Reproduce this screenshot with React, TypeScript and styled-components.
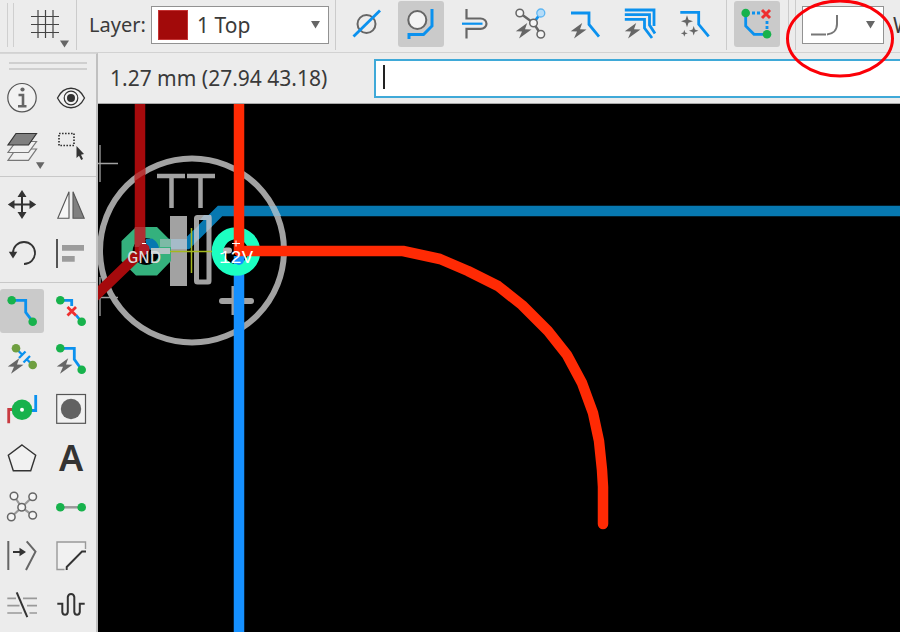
import React from "react";
import styled, { createGlobalStyle, css } from "styled-components";

const BLUE = "#0b91ee";
const GREEN = "#17b24c";
const RED = "#ee2f2f";
const GREY = "#666";
const DARK = "#333";

const GlobalStyle = createGlobalStyle`
  * { box-sizing: border-box; }
  html, body, #root { height: 100%; }
  body {
    margin: 0;
    overflow: hidden;
    background: #ececec;
    color: #3a3a3a;
    font: 21px/28px "Noto Sans", "Open Sans", sans-serif;
  }
`;

const Page = styled.div`
  position: relative;
  display: flex;
  flex-direction: column;
  height: 100vh;
  overflow: hidden;
`;

const Toolbar = styled.header`
  display: flex;
  align-items: flex-start;
  flex: none;
  height: 53px;
  padding-left: 7px;
  overflow: hidden;
  border-bottom: 1px solid #d2d2d2;
  white-space: nowrap;
  > * { flex: none; }
`;

const Workspace = styled.div`
  display: flex;
  flex: 1;
  min-height: 0;
`;

const Grip = styled.div<{ $flat?: boolean }>`
  border: solid #cfcfcf;
  ${(p) =>
    p.$flat
      ? css`height: 8px; margin: 8px 9px 6px; border-width: 2px 0;`
      : css`width: 7px; height: 44px; margin: 3px 0 0; border-width: 0 1px;`}
`;

const Separator = styled.div<{ $before: number; $after: number }>`
  width: 1px;
  height: 50px;
  margin-left: ${(p) => p.$before}px;
  margin-right: ${(p) => p.$after}px;
  background: #cbcbcb;
`;

const ToolButton = styled.button<{ $size: number; $active?: boolean }>`
  display: grid;
  place-items: center;
  width: ${(p) => p.$size}px;
  height: ${(p) => p.$size}px;
  padding: 0;
  border: 0;
  border-radius: 3px;
  background: ${(p) => (p.$active ? "#cacaca" : "transparent")};
`;

const GridButton = styled(ToolButton)`
  margin: 1px 0 0 8px;
`;

const LayerLabel = styled.label`
  width: 62px;
  padding-top: 11px;
  font-size: 20px;
`;

const WidthLabel = styled.label`
  padding: 11px 0 0 9px;
`;

const DropDown = styled.div<{ $width: number }>`
  display: flex;
  align-items: center;
  width: ${(p) => p.$width}px;
  height: 38px;
  margin-top: 6px;
  padding: 0 8px 0 6px;
  border: 1px solid #929292;
  background: #fff;
`;

const Swatch = styled.span`
  width: 30px;
  height: 30px;
  border: 1px solid #c43333;
  background: #a20a0a;
`;

const Select = styled.select`
  flex: 1;
  min-width: 0;
  height: 34px;
  padding: 0 0 0 9px;
  border: 0;
  outline: 0;
  appearance: none;
  background: transparent;
  color: inherit;
  font: inherit;
`;

const RoutingTools = styled.div`
  display: grid;
  grid-template-columns: repeat(7, 1fr);
  justify-items: center;
  width: 382px;
  padding-top: 1px;
`;

const RatsnestTools = styled.div`
  padding-top: 1px;
`;

const Palette = styled.aside`
  flex: none;
  width: 98px;
  border-top: 1px solid #d6d6d6;
  border-right: 2px solid #c0c0c0;
  overflow: hidden;
`;

const PaletteGroup = styled.div`
  display: grid;
  grid-template-columns: 44px 44px;
  grid-auto-rows: 44px;
  gap: 5px;
  padding: 6px 0;
  & + & { border-top: 1px solid #c8c8c8; }
`;

const PaletteFirst = styled(PaletteGroup)`
  padding: 0 0 7px;
`;

const Main = styled.main`
  display: flex;
  flex: 1;
  flex-direction: column;
  min-width: 0;
`;

const CommandBar = styled.div`
  display: flex;
  align-items: center;
  flex: none;
  height: 51px;
  border-bottom: 1px solid #a8a8a8;
`;

const Coordinates = styled.output`
  flex: none;
  width: 276px;
  padding-left: 12px;
  white-space: nowrap;
`;

const CommandField = styled.label`
  display: flex;
  align-items: center;
  flex: 1;
  height: 39px;
  padding-left: 7px;
  border: 2px solid #3fa9d8;
  border-right: 0;
  background: #fff;
`;

const Caret = styled.span`
  width: 2px;
  height: 24px;
  margin-bottom: 3px;
  background: #222;
`;

const CommandInput = styled.input`
  flex: 1;
  min-width: 0;
  border: 0;
  outline: 0;
  background: transparent;
  font: inherit;
`;

const Board = styled.svg`
  display: block;
  flex: 1;
  width: 100%;
  min-height: 0;
  background: #000;
`;

const Highlight = styled.svg`
  position: absolute;
  top: 0;
  left: 785px;
  width: 110px;
  height: 80px;
  pointer-events: none;
`;

const IconSvg = styled.svg`
  display: block;
  width: 32px;
  height: 32px;
  overflow: visible;
  fill: none;
`;

const ArrowSvg = styled.svg`
  display: block;
  flex: none;
  width: 9px;
  height: 8px;
`;

const BendSvg = styled.svg`
  display: block;
  flex: none;
  width: 30px;
  height: 24px;
`;

const Arrow = () => (
  <ArrowSvg viewBox="0 0 9 8" aria-hidden>
    <path d="M0 0H9L4.500 7.500Z" fill={GREY} />
  </ArrowSvg>
);

const Bolt = ({ y = 0 }: { y?: number }) => (
  <path
    transform={`translate(0 ${y})`}
    d="M13.2 15 1.8 23.2 8 23.6 5 30.500 17.500 21.500 11 21.200Z"
    fill={GREY}
  />
);

const Dot = ({ x, y, r = 4.3, fill = GREEN }: { x: number; y: number; r?: number; fill?: string }) => (
  <circle cx={x} cy={y} r={r} fill={fill} />
);

const Node = ({ x, y }: { x: number; y: number }) => (
  <circle cx={x} cy={y} r="3.800" fill="#f5f5f5" stroke={GREY} strokeWidth="1.500" />
);

const sparkle = (x: number, y: number, r: number) =>
  `M${x} ${y - r}L${x + r / 4} ${y - r / 4}L${x + r} ${y}L${x + r / 4} ${y + r / 4}L${x} ${y + r}L${x - r / 4} ${y + r / 4}L${x - r} ${y}L${x - r / 4} ${y - r / 4}Z`;

const ignoreObstacles = (
  <>
    <circle cx="16.500" cy="16" r="9" stroke={GREY} strokeWidth="2" />
    <path d="M3.500 28.500 30 2.500" stroke={BLUE} strokeWidth="2.800" />
  </>
);
const walkaround = (
  <>
    <circle cx="12.300" cy="12" r="9" fill="#f3f3f3" stroke={GREY} strokeWidth="2" />
    <path d="M27 1V18L18.500 26.500H4V31" stroke={BLUE} strokeWidth="3" />
  </>
);
const pushTrace = (
  <>
    <path d="M7.500 1V10.500H21.500A6 5.200 0 0 1 21.500 20.900H7.500V30.500" stroke={GREY} strokeWidth="2.200" />
    <path d="M3 15.700H23.500" stroke={BLUE} strokeWidth="2.200" />
  </>
);
const fanout = (
  <>
    <path d="M5.800 5 19.500 15 26.800 26.300" stroke={GREY} strokeWidth="2.500" />
    <path d="M19.500 15 26.800 5" stroke={BLUE} strokeWidth="2.800" />
    <Node x={5.8} y={5} />
    <Node x={19.5} y={15} />
    <Node x={26.8} y={26.3} />
    <circle cx="26.800" cy="5" r="4" fill="#b5dcf8" stroke="#5db5f2" strokeWidth="1.300" />
    <Bolt />
  </>
);
const quickTrace = (
  <>
    <path d="M2 5H20V16.500L30 28.700" stroke={BLUE} strokeWidth="2.800" />
    <Bolt />
  </>
);
const quickBus = (
  <>
    <path
      d="M1.800 2H31V18M1.800 6.700H26.500V17L32 25.500M1.800 11.300H21.500V20L29 30"
      stroke={BLUE}
      strokeWidth="2.800"
    />
    <Bolt />
  </>
);
const smartTrace = (
  <>
    <path d="M2.300 4.300H20.700V16.300L30.700 28.300" stroke={BLUE} strokeWidth="2.800" />
    <path d={sparkle(9, 13.3, 6) + sparkle(6.3, 25.3, 3.5) + sparkle(15.7, 22.7, 4.7)} fill={GREY} />
  </>
);
const loopRemoval = (
  <>
    <path d="M4.700 5V18L13 26.300H26" stroke={BLUE} strokeWidth="2.800" />
    <path d="M11 5H19M26 13V21" stroke={BLUE} strokeWidth="2.800" strokeDasharray="3 2" />
    <path d="M21 2 29 10M29 2 21 10" stroke={RED} strokeWidth="3" />
    <Dot x={4.7} y={5} />
    <Dot x={26} y={26.3} />
  </>
);
const gridIcon = (
  <>
    <path d="M9 2V30M16.500 2V30M24 2V30M2 8.500H30M2 16.500H30M2 24.500H30" stroke="#444" strokeWidth="1.200" />
    <path d="M31 32.500H40L35.500 39.500Z" fill={GREY} />
  </>
);

const info = (
  <>
    <circle cx="16" cy="15.700" r="14.200" fill="#f2f2f2" stroke="#555" strokeWidth="1.200" />
    <path d="M12.500 13H18.300M17 12V24M12 24.200H20.500" stroke={GREY} strokeWidth="2.600" />
    <circle cx="16.500" cy="7.500" r="2.100" fill={GREY} />
  </>
);
const eye = (
  <>
    <path d="M2.500 16C9 3 23 3 29.500 16C23 29 9 29 2.500 16Z" fill="#f3f3f3" stroke={DARK} strokeWidth="1.300" />
    <circle cx="16" cy="16" r="6.800" stroke={DARK} strokeWidth="1.200" />
    <circle cx="16" cy="16" r="4" fill={DARK} />
  </>
);
const layers = (
  <>
    <path d="M10 18H30.500L22.500 29.300H2Z" fill="#f0f0f0" stroke="#777" strokeWidth="1.200" />
    <path d="M10 10.500H30.500L22.500 21.500H2Z" fill="#f0f0f0" stroke="#777" strokeWidth="1.200" />
    <path d="M10 2.500H30.500L22.500 14H2Z" fill="#808080" stroke={DARK} strokeWidth="1.200" />
    <path d="M30 31.200H38.500L34.200 38Z" fill={GREY} />
  </>
);
const selectArea = (
  <>
    <rect x="4" y="2.500" width="15" height="12" stroke={DARK} strokeWidth="1.700" strokeDasharray="1.600 1.400" />
    <path d="M21.500 15V27L24 24.800 26.200 29 28 28 26 23.800 29 23Z" fill={DARK} />
  </>
);
const move = (
  <>
    <path d="M16 5V26M6 15.500H26" stroke={DARK} strokeWidth="2" />
    <path
      d="M16 1 20.500 8H11.500ZM16 30 20.500 23H11.500ZM1.800 15.500 8.500 11V20ZM30.200 15.500 23.500 11V20Z"
      fill={DARK}
    />
  </>
);
const mirror = (
  <>
    <path d="M14 2.700V29.300H2.800Z" fill="#f6f6f6" stroke="#555" strokeWidth="1.100" />
    <path d="M18 2.700V29.300H29.200Z" fill="#808080" stroke="#555" strokeWidth="1.100" />
  </>
);
const rotate = (
  <>
    <path d="M7 15A11 11 0 1 1 18 26" stroke={DARK} strokeWidth="1.800" />
    <path d="M2.800 13.800H11.300L7 20.500Z" fill={DARK} />
  </>
);
const align = (
  <>
    <path d="M2 1V30" stroke="#555" strokeWidth="2" />
    <path d="M7 7H29V12.700H7ZM7 18H19.700V23.700H7Z" fill="#9c9c9c" />
  </>
);
const route = (
  <>
    <path d="M5.700 5.300H19.700V17.300L26.700 26.700" stroke={BLUE} strokeWidth="2.800" />
    <Dot x={5.7} y={5.3} />
    <Dot x={26.7} y={26.7} />
  </>
);
const ripup = (
  <>
    <path d="M5.300 5.300H16.700V11M21 20 25 25" stroke={BLUE} strokeWidth="2.800" />
    <path d="M12.500 12 21 20.500M21 12 12.500 20.500" stroke={RED} strokeWidth="2.800" />
    <Dot x={5.3} y={5.3} />
    <Dot x={26.7} y={26.7} />
  </>
);
const quickAirwire = (
  <>
    <path
      d="M11.500 6 16 10.500M20.500 15 26 20.500M19.500 7.500 13 14M24 12 17.500 18.500"
      stroke={BLUE}
      strokeWidth="2.300"
    />
    <Dot x={10} y={4.3} fill="#6f9f40" />
    <Dot x={26.7} y={21} fill="#6f9f40" />
    <Bolt y={-0.8} />
  </>
);
const quickRoute = (
  <>
    <path d="M5.300 4.300H19.300V15.300L26.700 25.700" stroke={BLUE} strokeWidth="2.800" />
    <Dot x={5.3} y={4.3} />
    <Dot x={26.7} y={25.7} />
    <Bolt y={-0.8} />
  </>
);
const via = (
  <>
    <path d="M2.700 30.300V16.500H8" stroke="#c83a40" strokeWidth="2.800" />
    <path d="M29.700 2V17.500H24" stroke={BLUE} strokeWidth="2.800" />
    <Dot x={16} y={16.7} r={10.3} />
    <Dot x={16} y={16.7} r={2} fill="#fff" />
  </>
);
const pad = (
  <>
    <rect x="1.700" y="1.500" width="28.800" height="28.800" fill="#f1f1f1" stroke="#555" strokeWidth="1.200" />
    <circle cx="16" cy="16" r="10.200" fill="#626262" />
  </>
);
const polygon = (
  <path d="M16 3 29.700 13.300 24.700 28.700H7.300L2.300 13.300Z" fill="#f1f1f1" stroke={DARK} strokeWidth="1.400" />
);
const ratsnest = (
  <>
    <path d="M8 5 15.700 16.300 26.700 5.700M5.300 26 15.700 16.300 26.700 24.300" stroke="#999" strokeWidth="2.200" />
    <Node x={8} y={5} />
    <Node x={26.7} y={5.7} />
    <Node x={15.7} y={16.3} />
    <Node x={5.3} y={26} />
    <Node x={26.7} y={24.3} />
  </>
);
const airwire = (
  <>
    <path d="M5 16.300H27" stroke="#999" strokeWidth="2.500" />
    <Dot x={5.3} y={16.3} />
    <Dot x={26.7} y={16.3} />
  </>
);
const miter = (
  <>
    <path d="M2.300 1V30M20.700 1.300 29.500 11.700 20 30" stroke={GREY} strokeWidth="2" />
    <path d="M7 12H15" stroke={DARK} strokeWidth="2" />
    <path d="M13.500 7.700 20 12 13.500 16.300Z" fill={DARK} />
  </>
);
const split = (
  <>
    <path d="M9.500 29.500H2V2H30.500V9" fill="#f1f1f1" stroke="#999" strokeWidth="1.400" />
    <path d="M11.700 30V27L27 11.500H31" stroke={DARK} strokeWidth="1.900" />
  </>
);
const slice = (
  <>
    <path
      d="M1.300 9.300H10M17 9.300H31M1.300 16.700H13.500M21 16.700H31M1.300 24H16M23.500 24H31"
      stroke="#999"
      strokeWidth="1.700"
    />
    <path d="M10.700 3.300 21.300 28.200" stroke={DARK} strokeWidth="2" />
  </>
);
const meander = (
  <path
    d="M2.300 14.700H7.300V23A2.800 3.300 0 0 0 12.800 23V8A3.300 3.600 0 0 1 19.300 8V23A2.800 3.300 0 0 0 24.800 23V14.700H29.700"
    stroke={DARK}
    strokeWidth="2"
  />
);
const textIcon = (
  <text x="16" y="29" textAnchor="middle" fontFamily="Noto Sans" fontSize="36" fontWeight="600" fill={DARK}>
    A
  </text>
);

type Item = { name: string; icon: React.ReactNode; active?: boolean };

const routingTools: Item[] = [
  { name: "Ignore obstacles", icon: ignoreObstacles },
  { name: "Walk around obstacles", icon: walkaround, active: true },
  { name: "Push obstacles", icon: pushTrace },
  { name: "Fanout", icon: fanout },
  { name: "Quick trace", icon: quickTrace },
  { name: "Quick bus", icon: quickBus },
  { name: "Smart trace", icon: smartTrace },
];

const viewTools: Item[] = [
  { name: "Info", icon: info },
  { name: "Show", icon: eye },
  { name: "Layers", icon: layers },
  { name: "Select area", icon: selectArea },
];

const editTools: Item[] = [
  { name: "Move", icon: move },
  { name: "Mirror", icon: mirror },
  { name: "Rotate", icon: rotate },
  { name: "Align", icon: align },
];

const drawTools: Item[] = [
  { name: "Route", icon: route, active: true },
  { name: "Ripup", icon: ripup },
  { name: "Quick airwire", icon: quickAirwire },
  { name: "Quick route", icon: quickRoute },
  { name: "Via", icon: via },
  { name: "Pad", icon: pad },
  { name: "Polygon", icon: polygon },
  { name: "Text", icon: textIcon },
  { name: "Ratsnest", icon: ratsnest },
  { name: "Airwire", icon: airwire },
  { name: "Optimize", icon: miter },
  { name: "Miter", icon: split },
  { name: "Slice", icon: slice },
  { name: "Meander", icon: meander },
];

const Tools = ({ items, size }: { items: Item[]; size: number }) => (
  <>
    {items.map((t) => (
      <ToolButton key={t.name} type="button" aria-label={t.name} aria-pressed={!!t.active} $size={size} $active={t.active}>
        <IconSvg viewBox="0 0 32 32" aria-hidden>{t.icon}</IconSvg>
      </ToolButton>
    ))}
  </>
);

const BoardDrawing = () => (
  <Board role="img" aria-label="Board layout">
    <g transform="translate(-98 -104)" fill="none">
      {/* bottom copper */}
      <path d="M146 244H187L220 211H6000" stroke="#0778b0" strokeWidth="10.500" />

      {/* package outline */}
      <g stroke="#a2a2a2">
        <circle cx="192" cy="250.500" r="92" strokeWidth="6" />
        <path d="M157 176H185M171.500 176V208M187 176H215M200.500 176V208" strokeWidth="4.500" />
        <path d="M170 216H187V286H170Z" fill="#a2a2a2" stroke="none" />
        <rect x="196.500" y="217.500" width="12.500" height="64.500" rx="1" strokeWidth="5" />
        <path d="M222 301H251" strokeWidth="6" strokeLinecap="round" />
        <path d="M233 286V315" strokeWidth="3" />
        <path d="M97 163.500H118M100 145V182M97 297.500H118M100 277V316" strokeWidth="1.300" />
      </g>
      <path d="M170 239H187V249H170Z" fill="#a6bbc9" />
      <path d="M194 230 199 225V239L194 244ZM206.500 217.500 211.500 215.500V227L206.500 232ZM200 220 204 215H211V220Z" fill="#a6bbc9" />
      <path d="M269.500 206H276L281 216H274Z" fill="#8fb4c8" />
      <path d="M239 256V6000" stroke="#1590ff" strokeWidth="10.500" />

      {/* GND pad */}
      <path
        fillRule="evenodd"
        d="M136 227H157L171 241V261L157 275.500H136L121.500 261V241ZM146 238A13.500 13.500 0 1 0 146.100 238Z"
        fill="#34b17d"
      />
      <path d="M145 240 152 238.500A13 13 0 0 1 158.500 246.500L150 250Z" fill="#0778b0" />
      <path d="M151 251H170" stroke="#b4c3c5" strokeWidth="6" />
      <path d="M160 243H171" stroke="#7dbaa6" strokeWidth="8" />

      {/* 12V pad */}
      <circle cx="236" cy="251.500" r="18.300" stroke="#1cffc2" strokeWidth="12" />
      <path d="M226 250.500H229" stroke="#b5b5b5" strokeWidth="6" strokeLinecap="round" />
      <path d="M170 251.500H212" stroke="#a5b81e" strokeWidth="1.500" />
      <path d="M191.500 228V273" stroke="#a5b81e" strokeWidth="1.500" />
      <circle cx="239" cy="260" r="5" fill="#1590ff" />

      {/* top copper */}
      <path d="M140 100V250" stroke="#a50a0c" strokeWidth="10.500" />
      <path d="M144 249 90 301" stroke="#a50a0c" strokeWidth="10.500" strokeLinecap="round" />
      <path d="M140 227V247" stroke="#ae3033" strokeWidth="10.500" />
      <circle cx="144" cy="249" r="5.500" fill="#b01a26" />
      <path d="M134.700 174.500 145.300 168V174L134.700 181Z" fill="#b63737" />
      <path d="M239 100V251" stroke="#ff2a04" strokeWidth="10.500" />
      <path
        d="M239 251H403L440 259 468 271 498 286 522 305 548 331 567 355 582 383 593 413 599 441 602 470 603 487V524"
        stroke="#ff2a04"
        strokeWidth="10.500"
        strokeLinecap="round"
        strokeLinejoin="round"
      />

      <g fontFamily="Liberation Mono" fontSize="19" textAnchor="middle">
        <text x="144" y="263" fill="#dcdcdc">GND</text>
        <text x="236" y="263" fill="#fff">12V</text>
      </g>
      <path d="M232 243.500H240M236 240.500V246.500M142 243.500H146" stroke="#fff" strokeWidth="1" />
    </g>
  </Board>
);

export default function App() {
  return (
    <Page>
      <GlobalStyle />
      <Toolbar>
        <Grip />
        <GridButton type="button" aria-label="Grid" $size={46}>
          <IconSvg viewBox="0 0 32 32" aria-hidden>{gridIcon}</IconSvg>
        </GridButton>
        <Separator $before={8} $after={12} />
        <LayerLabel htmlFor="layer">Layer:</LayerLabel>
        <DropDown $width={178}>
          <Swatch />
          <Select id="layer" defaultValue="1">
            <option value="1">1 Top</option>
            <option value="16">16 Bottom</option>
          </Select>
          <Arrow />
        </DropDown>
        <Separator $before={6} $after={3} />
        <RoutingTools>
          <Tools items={routingTools} size={46} />
        </RoutingTools>
        <Separator $before={5} $after={7} />
        <RatsnestTools>
          <Tools items={[{ name: "Loop removal", icon: loopRemoval, active: true }]} size={46} />
        </RatsnestTools>
        <Separator $before={8} $after={6} />
        <Separator $before={0} $after={6} />
        <DropDown $width={82}>
          <BendSvg viewBox="0 0 30 24" fill="none" stroke="#777" strokeWidth="2" aria-hidden>
            <path d="M2 21.500H17M18 21.500C24 21 28 17 28 11V2" />
          </BendSvg>
          <Select aria-label="Wire bend" defaultValue="arc">
            <option value="arc" aria-label="Arc" />
          </Select>
          <Arrow />
        </DropDown>
        <WidthLabel>Width:</WidthLabel>
      </Toolbar>
      <Workspace>
        <Palette>
          <Grip $flat />
          <PaletteFirst>
            <Tools items={viewTools} size={44} />
          </PaletteFirst>
          <PaletteGroup>
            <Tools items={editTools} size={44} />
          </PaletteGroup>
          <PaletteGroup>
            <Tools items={drawTools} size={44} />
          </PaletteGroup>
        </Palette>
        <Main>
          <CommandBar>
            <Coordinates>1.27 mm (27.94 43.18)</Coordinates>
            <CommandField>
              <Caret />
              <CommandInput type="text" aria-label="Command" />
            </CommandField>
          </CommandBar>
          <BoardDrawing />
        </Main>
      </Workspace>
      <Highlight viewBox="0 0 110 80" aria-hidden>
        <ellipse cx="55" cy="38.500" rx="52.500" ry="37.500" fill="none" stroke="#fb0007" strokeWidth="3" />
      </Highlight>
    </Page>
  );
}
